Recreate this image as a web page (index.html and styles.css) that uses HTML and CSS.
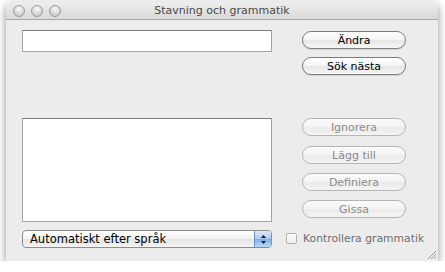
FILE: index.html
```html
<!DOCTYPE html>
<html>
<head>
    <title>Stavning och grammatik</title>
    <link rel="stylesheet" href="styles.css">
</head>
<body>
    <div id="window">
        <div id="titlebar">
            <div class="lights">
                <span class="light"></span>
                <span class="light"></span>
                <span class="light"></span>
            </div>
            <div class="title">Stavning och grammatik</div>
        </div>
        <div id="content">
            <div id="left-col">
                <div class="field word-field"></div>
                <div class="field guess-list"></div>
                <div class="popup">
                    <span class="popup-label">Automatiskt efter språk</span>
                    <span class="stepper">
                        <svg width="7" height="11" viewBox="0 0 7 11">
                            <path d="M3.5 1 L6 4 L1 4 Z" fill="#1a1a1a"/>
                            <path d="M3.5 10 L6 7 L1 7 Z" fill="#1a1a1a"/>
                        </svg>
                    </span>
                </div>
            </div>
            <div id="right-col">
                <button class="btn first">Ändra</button>
                <button class="btn second">Sök nästa</button>
                <button class="btn off third">Ignorera</button>
                <button class="btn off fourth">Lägg till</button>
                <button class="btn off fifth">Definiera</button>
                <button class="btn off sixth">Gissa</button>
                <label class="check">
                    <span class="box"></span>
                    <span>Kontrollera grammatik</span>
                </label>
            </div>
        </div>
        <svg class="grip" width="12" height="12" viewBox="0 0 12 12">
            <path d="M11 3 L3 11 M11 6 L6 11 M11 9 L9 11" stroke="#9a9a9a" stroke-width="1"/>
        </svg>
    </div>
</body>
</html>
```

FILE: styles.css
```css
body {
    margin: 0;
    padding: 0;
    background-color: #ffffff;
    font-family: "DejaVu Sans", sans-serif;
    font-size: 11px;
    color: #111;
}
#window {
    position: relative;
    margin: 2px 0 0 6px;
    width: 432px;
    height: 259px;
    background-color: #ececec;
    border-radius: 5px 5px 0 0;
    box-shadow: 0 3px 8px rgba(0, 0, 0, 0.45);
    overflow: hidden;
}
#titlebar {
    position: relative;
    height: 17px;
    background: linear-gradient(#eeeeee, #d9d9d9);
    border-bottom: 1px solid #a8a8a8;
    display: flex;
    align-items: center;
}
.lights {
    display: flex;
    gap: 6px;
    padding-left: 7px;
}
.light {
    width: 10px;
    height: 10px;
    border-radius: 50%;
    border: 1px solid #9a9a9a;
    background: radial-gradient(circle at 50% 30%, #fafafa, #d4d4d4 60%, #bcbcbc);
}
.title {
    position: absolute;
    left: 0;
    right: 0;
    top: 2px;
    text-align: center;
    color: #4a4a4a;
    font-size: 11px;
}
#content {
    display: flex;
    padding: 10px 0 0 16px;
}
#left-col {
    width: 250px;
    display: flex;
    flex-direction: column;
}
.field {
    background-color: #fff;
    border: 1px solid #a4a4a4;
    border-top-color: #7c7c7c;
    box-sizing: border-box;
}
.word-field {
    height: 22px;
}
.guess-list {
    height: 104px;
    margin-top: 66px;
}
.popup {
    margin-top: 8px;
    height: 18px;
    box-sizing: border-box;
    border: 1px solid #8c8c8c;
    border-radius: 4px;
    background: linear-gradient(#ffffff, #f3f3f3 50%, #e4e4e4 51%, #f4f4f4);
    display: flex;
    align-items: center;
    justify-content: space-between;
    overflow: hidden;
}
.popup-label {
    padding-left: 7px;
    font-size: 11.5px;
    color: #000;
}
.stepper {
    width: 16px;
    height: 16px;
    display: flex;
    align-items: center;
    justify-content: center;
    border-left: 1px solid #6d8fbf;
    background: linear-gradient(#dbe9fa, #a9c9f1 50%, #7fafea 51%, #b9d7fb);
}
#right-col {
    width: 150px;
    margin-left: 14px;
    display: flex;
    flex-direction: column;
    align-items: flex-start;
}
.btn {
    width: 104px;
    height: 18px;
    margin-left: 16px;
    padding: 0;
    font-family: "DejaVu Sans", sans-serif;
    font-size: 11px;
    color: #000;
    border: 1px solid #7d7d7d;
    border-radius: 9px;
    background: linear-gradient(#ffffff, #f6f6f6 45%, #e6e6e6 55%, #f7f7f7);
    box-shadow: 0 1px 1px rgba(0, 0, 0, 0.12);
}
.btn.off {
    color: #8c8c8c;
    border-color: #b6b6b6;
    background: linear-gradient(#fbfbfb, #f3f3f3 50%, #ebebeb 51%, #f4f4f4);
    box-shadow: none;
}
.first { margin-top: 1px; }
.second { margin-top: 8px; }
.third { margin-top: 43px; }
.fourth { margin-top: 10px; }
.fifth { margin-top: 9px; }
.sixth { margin-top: 9px; }
.check {
    margin-top: 14px;
    display: flex;
    align-items: center;
    gap: 6px;
    color: #6e6e6e;
    font-size: 10.8px;
}
.box {
    width: 11px;
    height: 11px;
    box-sizing: border-box;
    border: 1px solid #b0b0b0;
    border-radius: 2px;
    background: linear-gradient(#fdfdfd, #eeeeee);
}
.grip {
    position: absolute;
    right: 1px;
    bottom: 1px;
}
```
